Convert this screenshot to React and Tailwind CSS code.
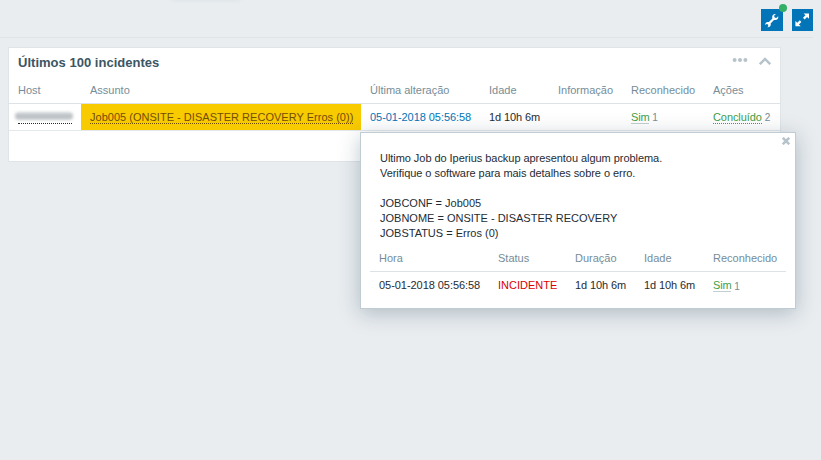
const mainCols = 'grid grid-cols-[72px_280px_119px_69px_73px_82px_76px]';
const popCols = 'grid grid-cols-[119px_77px_69px_69px_82px]';

function Wrench() {
  return (
    <svg width="22" height="22" viewBox="0 0 22 22" className="block">
      <path
        d="M17.2 7.2 15.3 9 13.6 8.6 13.1 6.8 14.9 5C12.8 4.6 10.9 6.1 11.2 8.5L11.4 9.6 7.9 13.1 6.9 12.9C5 12.9 4 14.3 4.2 16.1L5.6 15 7.1 15.5 7.3 17.2 6.3 18.2C8.4 18.4 9.9 17.1 9.8 15.2L9.6 14.4 13 11 14.2 11.1C16.3 11.1 17.7 9.5 17.2 7.2Z"
        fill="#fff"
      />
    </svg>
  );
}

function Expand() {
  return (
    <svg width="21" height="22" viewBox="0 0 21 22" className="block">
      <path d="M11.6 4.4H17v5.4l-1.9-1.9-2.5 2.5-1.6-1.6 2.5-2.5ZM8.8 17.3H3.4v-5.4l1.9 1.9 2.5-2.5 1.6 1.6-2.5 2.5Z" fill="#fff" />
    </svg>
  );
}

export default function App() {
  return (
    <div className="relative flex h-[460px] w-[821px] flex-col overflow-hidden bg-[#e9edf0] font-['Liberation_Sans',Arial,sans-serif] text-[11px] leading-[15px] text-[#1f2c33]">
      <div className="absolute -top-[5px] left-[172px] h-1 w-[68px] shadow-[0_0_5px_rgba(120,140,150,0.2)]" />
      <header className="mr-2 flex h-[38px] shrink-0 items-start justify-end gap-[9px] border-b border-[#dfe4e7] pt-[9px]">
        <button className="relative h-[22px] w-[22px] bg-[#0275b8]">
          <Wrench />
          <span className="absolute -top-[5px] -right-[4px] h-2 w-2 rounded-full bg-[#34af67]" />
        </button>
        <button className="h-[22px] w-[21px] bg-[#0275b8]">
          <Expand />
        </button>
      </header>

      <section className="mt-[9px] ml-2 h-[115px] w-[773px] border border-[#dfe4e7] bg-white">
        <div className="flex h-[29px] items-center pr-[9px] pl-[9px]">
          <h4 className="flex-1 text-[13px] font-bold tracking-[0.02px] text-[#3c5563]">Últimos 100 incidentes</h4>
          <svg width="16" height="6" viewBox="0 0 16 6" className="mt-[-5px] mr-[11px]" fill="#b6c3ca">
            <circle cx="2.6" cy="3" r="2" />
            <circle cx="8" cy="3" r="2" />
            <circle cx="13.4" cy="3" r="2" />
          </svg>
          <svg width="12" height="8" viewBox="0 0 12 8" className="mt-[-4px]" fill="none" stroke="#b6c3ca" strokeWidth="2.4">
            <path d="M.8 7.2 6 1.9 11.2 7.2" />
          </svg>
        </div>
        <div className={`${mainCols} h-[27px] items-center border-b border-[#dce2e5] pt-[1px] text-[#768d99] [&>span]:pl-[9px]`}>
          <span>Host</span>
          <span>Assunto</span>
          <span>Última alteração</span>
          <span>Idade</span>
          <span>Informação</span>
          <span>Reconhecido</span>
          <span>Ações</span>
        </div>
        <div className={`${mainCols} h-[27px] border-b border-[#e3e8eb] [&>div]:flex [&>div]:items-center [&>div]:pl-[9px]`}>
          <div>
            <span className="flex h-[14px] w-[54px] flex-col border-b border-dotted border-[#1f2c33]">
              <span className="-ml-[3px] mt-[2px] h-[8px] w-[58px] shrink-0 rounded bg-gradient-to-b from-[#d6dadd] via-[#b9bec2] to-[#c6cbce] blur-[1.5px]" />
            </span>
          </div>
          <div className="bg-[#f8ca00]">
            <span className="h-[14px] border-b border-dotted border-[#734d00] leading-[14px] tracking-[0.02px] whitespace-nowrap text-[#734d00]">
              Job005 (ONSITE - DISASTER RECOVERY Erros (0))
            </span>
          </div>
          <div className="tracking-[-0.05px] whitespace-nowrap text-[#0275b8]">05-01-2018 05:56:58</div>
          <div className="tracking-[-0.1px]">1d 10h 6m</div>
          <div />
          <div className="gap-[3px]">
            <span className="h-[14px] border-b border-[#c3cfd0] leading-[14px] tracking-[-0.2px] text-[#429e47]">Sim</span>
            <span className="pt-[1px] text-[10px] leading-[15px] text-[#768d99]">1</span>
          </div>
          <div className="gap-[3px]">
            <span className="h-[14px] border-b border-dotted border-[#429e47] leading-[14px] tracking-[-0.08px] text-[#429e47]">Concluído</span>
            <span className="pt-[1px] text-[10px] leading-[15px] text-[#768d99]">2</span>
          </div>
        </div>
      </section>

      <div className="absolute top-[132px] left-[360px] h-[177px] w-[436px] border border-[#c0ccd3] bg-white px-[9px] shadow-[0_4px_20px_rgba(0,40,60,0.25)]">
        <svg width="8" height="8" viewBox="0 0 8 8" className="absolute top-[4px] right-[5px]" stroke="#b6c3ca" strokeWidth="2.5">
          <path d="M.8.8 7.2 7.2M7.2.8.8 7.2" />
        </svg>
        <div className="h-[112px] pt-[18px] pl-[10px] whitespace-pre">
          <p className="tracking-[-0.05px]">
            {`Ultimo Job do Iperius backup apresentou algum problema.
Verifique o software para mais detalhes sobre o erro.`}
          </p>
          <p className="mt-[15px]">
            {`JOBCONF = Job005
JOBNOME = ONSITE - DISASTER RECOVERY
JOBSTATUS = Erros (0)`}
          </p>
        </div>
        <div className={`${popCols} h-[27px] items-center border-b border-[#dce2e5] text-[#768d99] [&>span]:pl-[9px]`}>
          <span>Hora</span>
          <span>Status</span>
          <span>Duração</span>
          <span>Idade</span>
          <span>Reconhecido</span>
        </div>
        <div className={`${popCols} h-[27px] [&>div]:flex [&>div]:items-center [&>div]:pl-[9px]`}>
          <div className="tracking-[-0.05px] whitespace-nowrap">05-01-2018 05:56:58</div>
          <div className="text-[#dc0000]">INCIDENTE</div>
          <div className="tracking-[-0.1px]">1d 10h 6m</div>
          <div className="tracking-[-0.1px]">1d 10h 6m</div>
          <div className="gap-[3px]">
            <span className="h-[13px] border-b border-[#c3cfd0] leading-[13px] tracking-[-0.2px] text-[#429e47]">Sim</span>
            <span className="pt-[1px] text-[10px] leading-[15px] text-[#768d99]">1</span>
          </div>
        </div>
      </div>
    </div>
  );
}
